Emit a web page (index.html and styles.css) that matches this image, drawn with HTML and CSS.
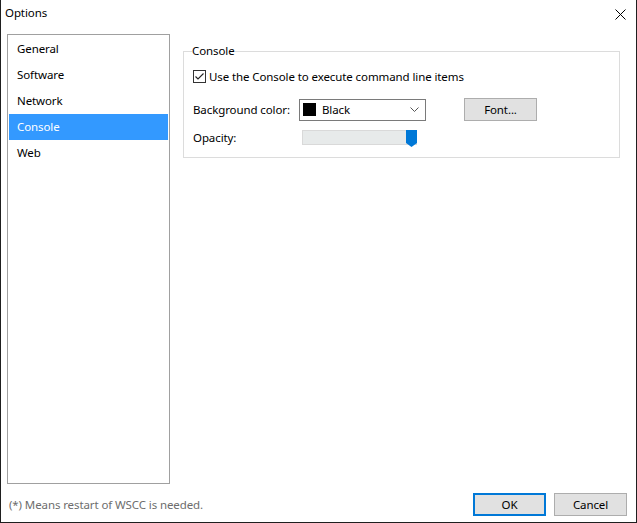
FILE: index.html
```html
<!DOCTYPE html>
<html>
<head>
<meta charset="utf-8">
<title>Options</title>
<link rel="stylesheet" href="styles.css">
</head>
<body>
<div class="window">
  <div class="titlebar">
    <span class="title">Options</span>
    <svg class="close" width="11" height="11" viewBox="0 0 11 11"><path d="M0.5 0.5 L10.5 10.5 M10.5 0.5 L0.5 10.5" stroke="#000" stroke-width="1" fill="none"/></svg>
  </div>
  <div class="main">
    <ul class="nav">
      <li class="nav-item">General</li>
      <li class="nav-item">Software</li>
      <li class="nav-item">Network</li>
      <li class="nav-item selected">Console</li>
      <li class="nav-item">Web</li>
    </ul>
    <div class="panel">
      <fieldset class="group">
        <legend class="legend">Console</legend>
        <div class="row row-check">
          <span class="checkbox">
            <svg width="13" height="13" viewBox="0 0 13 13"><rect x="0.5" y="0.5" width="12" height="12" fill="#fff" stroke="#333"/><path d="M2.5 6.5 L5 9 L10.5 3.5" stroke="#222" stroke-width="1.1" fill="none"/></svg>
          </span>
          <span class="check-label">Use the Console to execute command line items</span>
        </div>
        <div class="row row-color">
          <span class="label">Background color:</span>
          <div class="combo">
            <span class="swatch"></span>
            <span class="combo-text">Black</span>
            <svg class="chevron" width="9" height="5" viewBox="0 0 9 5"><path d="M0.5 0.5 L4.5 4.5 L8.5 0.5" stroke="#555" stroke-width="1" fill="none"/></svg>
          </div>
          <button class="btn btn-font">Font...</button>
        </div>
        <div class="row row-opacity">
          <span class="label">Opacity:</span>
          <div class="slider">
            <svg class="thumb" width="11" height="17" viewBox="0 0 11 17"><path d="M0 0 H11 V13 L5.5 17 L0 13 Z" fill="#0078d7"/></svg>
          </div>
        </div>
      </fieldset>
    </div>
  </div>
  <div class="footer">
    <span class="note">(*) Means restart of WSCC is needed.</span>
    <div class="buttons">
      <button class="btn btn-ok">OK</button>
      <button class="btn">Cancel</button>
    </div>
  </div>
</div>
</body>
</html>
```
FILE: styles.css
```css
html, body {
  margin: 0;
  padding: 0;
  background: #fff;
}
.window {
  width: 637px;
  height: 523px;
  box-sizing: border-box;
  border: 1px solid #1f1f1f;
  border-top: none;
  display: flex;
  flex-direction: column;
  font-family: "Noto Sans", "Open Sans", sans-serif;
  font-size: 11.5px;
  letter-spacing: -0.1px;
  color: #000;
  background: #fff;
}
.titlebar {
  height: 30px;
  display: flex;
  align-items: center;
  justify-content: space-between;
  padding: 0 10px 5px 4px;
  box-sizing: border-box;
}
.title {
  font-size: 11.5px;
}
.close {
  display: block;
  margin-top: 4px;
}
.main {
  display: flex;
  padding: 4px 0 0 6px;
  height: 450px;
  box-sizing: content-box;
}
.nav {
  list-style: none;
  margin: 0;
  padding: 1px;
  width: 163px;
  height: 450px;
  box-sizing: border-box;
  border: 1px solid #a0a0a0;
}
.nav-item {
  height: 26px;
  line-height: 26px;
  padding-left: 8px;
}
.nav-item.selected {
  background: #3399ff;
  color: #fff;
}
.panel {
  margin-left: 13px;
  padding-top: 9px;
}
.group {
  width: 437px;
  box-sizing: border-box;
  margin: 0;
  border: 1px solid #dcdcdc;
  padding: 0 0 11px 8px;
}
.legend {
  padding: 0;
  line-height: 16px;
}
.row {
  display: flex;
  align-items: center;
  padding-left: 1px;
}
.row-check {
  margin-top: 8px;
  height: 18px;
}
.checkbox svg {
  display: block;
}
.check-label {
  margin-left: 3px;
}
.row-color {
  margin-top: 13px;
  height: 23px;
}
.label {
  width: 106px;
  flex: none;
}
.combo {
  width: 127px;
  height: 22px;
  box-sizing: border-box;
  border: 1px solid #7a7a7a;
  display: flex;
  align-items: center;
  padding-left: 3px;
}
.swatch {
  width: 13px;
  height: 13px;
  background: #000;
}
.combo-text {
  margin-left: 6px;
  flex: 1;
}
.chevron {
  margin-right: 6px;
}
.btn {
  font-family: inherit;
  font-size: 11.5px;
  letter-spacing: -0.1px;
  color: #000;
  background: #e1e1e1;
  border: 1px solid #adadad;
  width: 73px;
  height: 23px;
  padding: 0;
  box-sizing: border-box;
}
.btn-font {
  margin-left: 38px;
}
.row-opacity {
  margin-top: 8px;
  height: 17px;
}
.slider {
  position: relative;
  margin-left: 3px;
  width: 115px;
  height: 15px;
  box-sizing: border-box;
  background: #e7eaea;
  border: 1px solid #d9d9d9;
}
.thumb {
  position: absolute;
  right: -1px;
  top: -1px;
  display: block;
}
.footer {
  margin-top: 9px;
  height: 23px;
  display: flex;
  align-items: center;
  justify-content: space-between;
  padding: 0 9px 0 8px;
}
.note {
  color: #6d6d6d;
}
.buttons {
  display: flex;
  gap: 8px;
}
.btn-ok {
  border: 2px solid #0078d7;
}
```
